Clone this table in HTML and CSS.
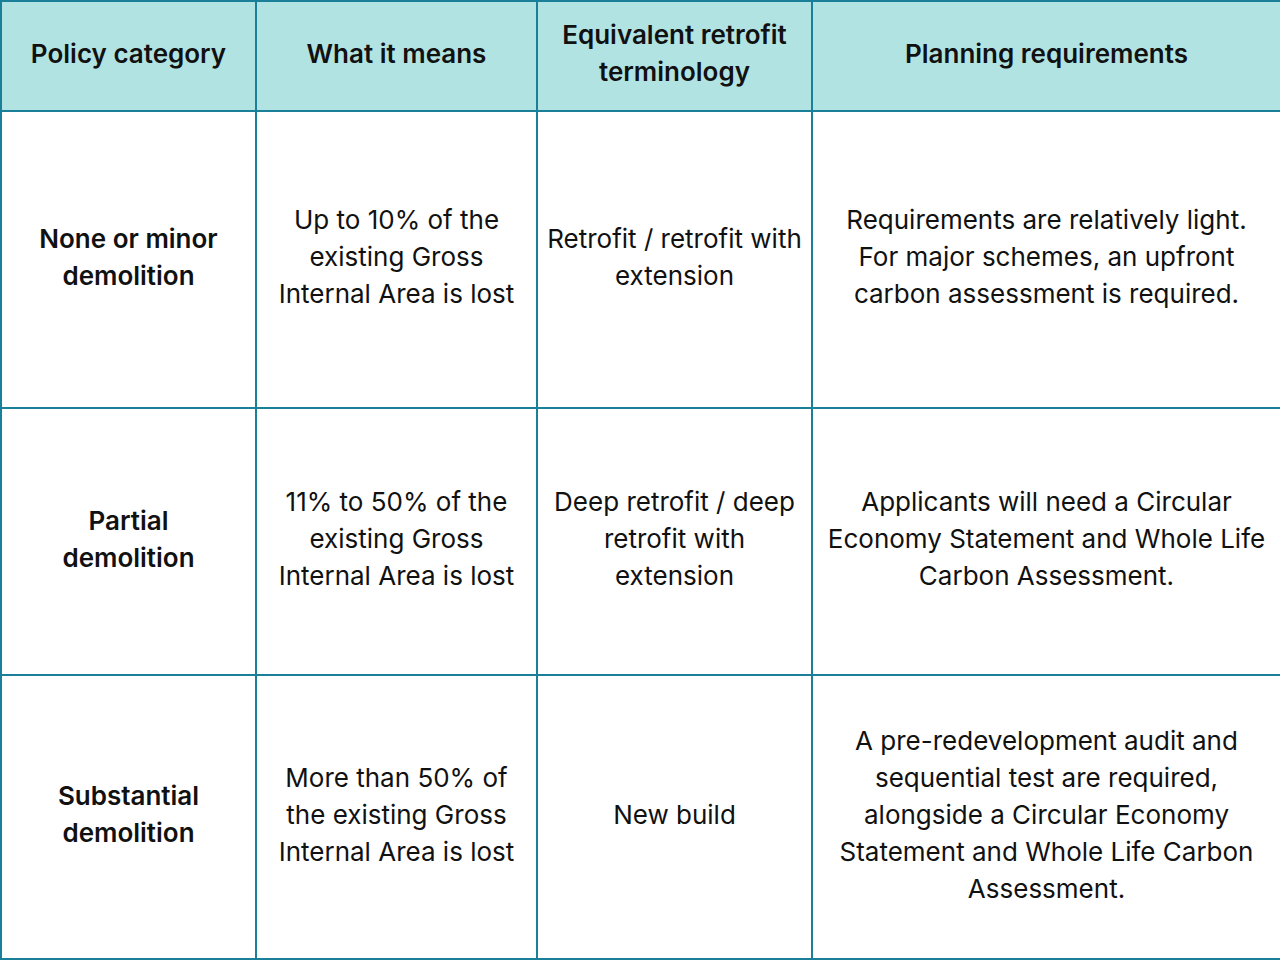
FILE: index.html
```html
<!DOCTYPE html>
<html lang="en">
<head>
<meta charset="utf-8">
<title>Demolition policy categories</title>
<link rel="stylesheet" href="styles.css">
</head>
<body>
<table class="policy">
  <colgroup>
    <col class="c1"><col class="c2"><col class="c3"><col class="c4">
  </colgroup>
  <thead>
    <tr class="head">
      <th>Policy category</th>
      <th>What it means</th>
      <th>Equivalent retrofit<br>terminology</th>
      <th>Planning requirements</th>
    </tr>
  </thead>
  <tbody>
    <tr class="r1">
      <th>None or minor<br>demolition</th>
      <td>Up to 10% of the<br>existing Gross<br>Internal Area is lost</td>
      <td>Retrofit / retrofit with<br>extension</td>
      <td>Requirements are relatively light.<br>For major schemes, an upfront<br>carbon assessment is required.</td>
    </tr>
    <tr class="r2">
      <th>Partial<br>demolition</th>
      <td>11% to 50% of the<br>existing Gross<br>Internal Area is lost</td>
      <td>Deep retrofit / deep<br>retrofit with<br>extension</td>
      <td>Applicants will need a Circular<br>Economy Statement and Whole Life<br>Carbon Assessment.</td>
    </tr>
    <tr class="r3">
      <th>Substantial<br>demolition</th>
      <td>More than 50% of<br>the existing Gross<br>Internal Area is lost</td>
      <td>New build</td>
      <td>A pre-redevelopment audit and<br>sequential test are required,<br>alongside a Circular Economy<br>Statement and Whole Life Carbon<br>Assessment.</td>
    </tr>
  </tbody>
</table>
</body>
</html>
```

FILE: styles.css
```css
html, body {
  margin: 0;
  padding: 0;
  background: #ffffff;
}

.policy {
  width: 1280px;
  table-layout: fixed;
  border-collapse: collapse;
  font-family: Inter, "Noto Sans", "Liberation Sans", sans-serif;
  font-size: 26px;
  line-height: 37px;
  color: #111111;
}

.c1 { width: 255px; }
.c2 { width: 281px; }
.c3 { width: 275px; }
.c4 { width: 469px; }

.policy th,
.policy td {
  border: 2px solid #1a7f98;
  padding: 0 4px 6px;
  text-align: center;
  vertical-align: middle;
  white-space: nowrap;
}

.policy th {
  font-weight: 600;
}

.policy td {
  font-weight: 400;
}

.head th {
  background: #b1e3e2;
}

.head { height: 110px; }
.r1 { height: 297px; }
.r2 { height: 267px; }
.r3 { height: 284px; }
```
